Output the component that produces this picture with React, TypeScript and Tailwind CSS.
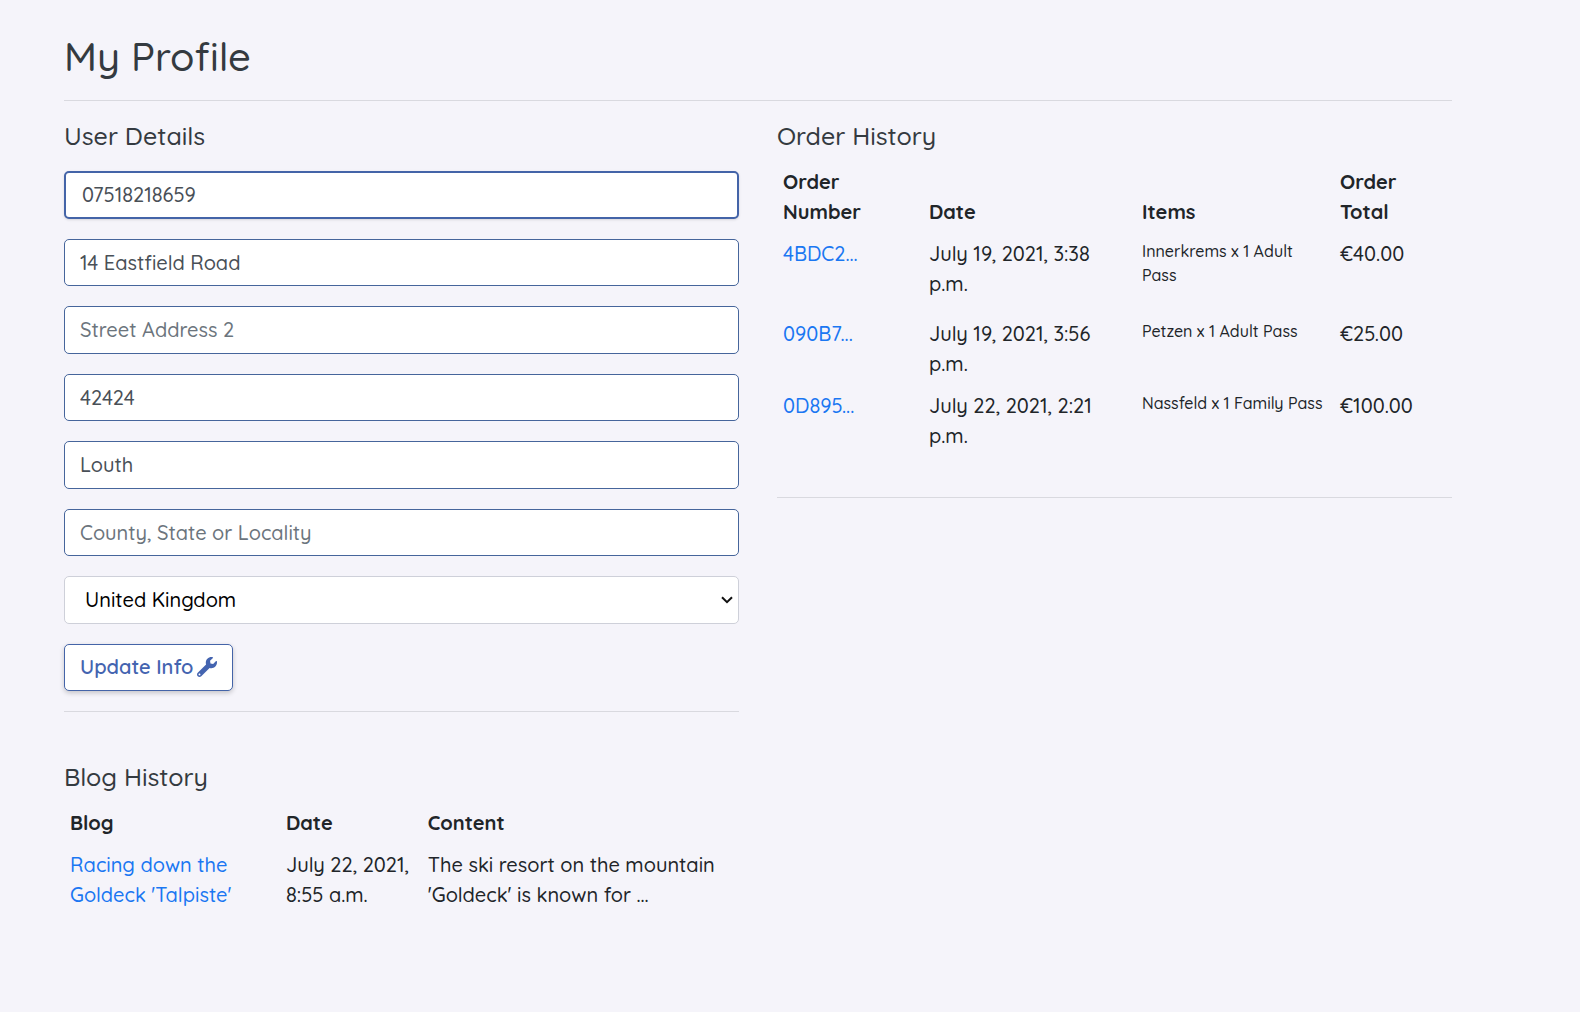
import { FaWrench } from "react-icons/fa";

type Field = { label: string; value?: string; placeholder?: string };

const fields: Field[] = [
  { label: "Phone Number", value: "07518218659" },
  { label: "Street Address 1", value: "14 Eastfield Road" },
  { label: "Street Address 2", placeholder: "Street Address 2" },
  { label: "Postal Code", value: "42424" },
  { label: "Town or City", value: "Louth" },
  { label: "County, State or Locality", placeholder: "County, State or Locality" },
];

const orders = [
  { number: "4BDC2...", date: "July 19, 2021, 3:38 p.m.", item: "Innerkrems x 1 Adult Pass", total: "€40.00" },
  { number: "090B7...", date: "July 19, 2021, 3:56 p.m.", item: "Petzen x 1 Adult Pass", total: "€25.00" },
  { number: "0D895...", date: "July 22, 2021, 2:21 p.m.", item: "Nassfeld x 1 Family Pass", total: "€100.00" },
];

function SectionTitle({ children }: { children: string }) {
  return <h2 className="mb-2.5 text-[25px] leading-[30px] font-medium text-[#343a40]">{children}</h2>;
}

function Rule() {
  return <hr className="my-5 border-t border-[#d9d9df]" />;
}

function ProfileForm() {
  return (
    <form className="mt-5 grid h-[520px] auto-rows-fr gap-5" onSubmit={(e) => e.preventDefault()}>
      {fields.map((f, i) => (
        <input
          key={f.label}
          aria-label={f.label}
          defaultValue={f.value}
          placeholder={f.placeholder}
          className={
            i === 0
              ? "w-full rounded-[5px] border-2 border-[#4464a8] bg-white px-4 text-xl text-[#495057] shadow-sm outline-none"
              : "w-full rounded-[5px] border border-[#46659b] bg-white px-[15px] pt-px text-xl text-[#495057] outline-none placeholder:text-[#6c757d]"
          }
        />
      ))}
      <div className="relative grid">
        <select
          aria-label="Country"
          defaultValue="United Kingdom"
          className="w-full appearance-none rounded-[5px] border border-[#ced0d9] bg-white px-5 text-xl text-black outline-none"
        >
          <option>United Kingdom</option>
          <option>Ireland</option>
          <option>Austria</option>
        </select>
        <svg
          viewBox="0 0 12 8"
          className="pointer-events-none absolute top-5 right-1.5 h-2 w-3 fill-none stroke-[#111] stroke-2"
        >
          <path d="M1 1.2 6 6.2 11 1.2" />
        </svg>
      </div>
      <button
        type="submit"
        className="flex items-center gap-1 justify-self-start rounded-[5px] border border-[#4464a8] bg-white px-[15px] text-xl font-semibold text-[#4464b0] shadow-[0_2px_5px_rgba(0,0,0,0.2)]"
      >
        Update Info
        <FaWrench className="size-5" />
      </button>
    </form>
  );
}

function BlogHistory() {
  return (
    <section className="mt-[50px]">
      <SectionTitle>Blog History</SectionTitle>
      <table className="w-full table-fixed text-left">
        <thead>
          <tr className="align-bottom">
            <th className="w-[32%] p-1.5">Blog</th>
            <th className="w-[21%] p-1.5">Date</th>
            <th className="p-1.5">Content</th>
          </tr>
        </thead>
        <tbody>
          <tr className="align-top">
            <td className="p-1.5 pr-8">
              <a href="#blog" className="text-[#1a77f2]">Racing down the Goldeck 'Talpiste'</a>
            </td>
            <td className="p-1.5">July 22, 2021, 8:55 a.m.</td>
            <td className="p-1.5">The ski resort on the mountain 'Goldeck' is known for ...</td>
          </tr>
        </tbody>
      </table>
    </section>
  );
}

function OrderHistory() {
  return (
    <section>
      <SectionTitle>Order History</SectionTitle>
      <table className="w-full table-fixed text-left">
        <thead>
          <tr className="align-bottom">
            <th className="w-[146px] p-1.5 pr-10">Order Number</th>
            <th className="w-[213px] p-1.5">Date</th>
            <th className="w-[198px] p-1.5">Items</th>
            <th className="p-1.5 pr-10">Order Total</th>
          </tr>
        </thead>
        <tbody>
          {orders.map((o) => (
            <tr key={o.number} className="align-top">
              <td className="p-1.5">
                <a href="#order" className="text-[#1a77f2]">{o.number}</a>
              </td>
              <td className="p-1.5 pr-8">{o.date}</td>
              <td className="p-1.5">
                <ul className="mb-5 text-base leading-6">
                  <li>{o.item}</li>
                </ul>
              </td>
              <td className="p-1.5">{o.total}</td>
            </tr>
          ))}
        </tbody>
      </table>
      <div className="pt-5">
        <Rule />
      </div>
    </section>
  );
}

export default function App() {
  return (
    <main className="min-h-screen bg-[#f5f4fa] pt-8 pr-32 pb-8 pl-16 font-[Quicksand,Lato,sans-serif] text-xl leading-[30px] font-medium text-[#212529]">
      <h1 className="text-[40px] leading-[48px] font-medium text-[#343a40]">My Profile</h1>
      <Rule />
      <div className="grid grid-cols-2 gap-[38px]">
        <div>
          <section>
            <SectionTitle>User Details</SectionTitle>
            <ProfileForm />
          </section>
          <Rule />
          <BlogHistory />
        </div>
        <OrderHistory />
      </div>
    </main>
  );
}
